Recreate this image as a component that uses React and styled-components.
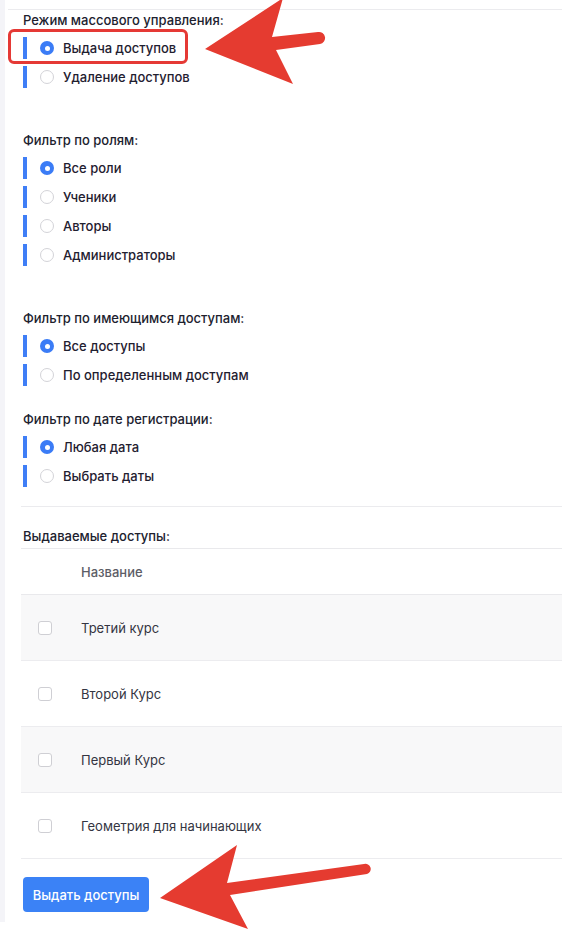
import React from 'react'
import styled, { createGlobalStyle } from 'styled-components'

const GlobalStyle = createGlobalStyle`
  html, body {
    margin: 0;
    padding: 0;
    background: #ffffff;
  }
  body {
    font-family: Inter, "Noto Sans", sans-serif;
    color: #1f2030;
  }
`

const sections = [
  {
    title: 'Режим массового управления:',
    options: ['Выдача доступов', 'Удаление доступов'],
    gap: 42,
    highlight: true,
  },
  {
    title: 'Фильтр по ролям:',
    options: ['Все роли', 'Ученики', 'Авторы', 'Администраторы'],
    gap: 42,
  },
  {
    title: 'Фильтр по имеющимся доступам:',
    options: ['Все доступы', 'По определенным доступам'],
    gap: 23,
  },
  {
    title: 'Фильтр по дате регистрации:',
    options: ['Любая дата', 'Выбрать даты'],
    gap: 19,
  },
]

const courses = ['Третий курс', 'Второй Курс', 'Первый Курс', 'Геометрия для начинающих']

const Arrow = ({ d }) => (
  <ArrowSvg width="562" height="929" viewBox="0 0 562 929">
    <path d={d} fill="#e53b30" />
  </ArrowSvg>
)

const App = () => {
  return (
    <>
      <GlobalStyle />
      <Page>
        <Rail />
        <Content>
          {sections.map((s, si) => (
            <Section key={si} gap={s.gap}>
              <Label>{s.title}</Label>
              <Options>
                {s.options.map((o, oi) => (
                  <Option key={o}>
                    <Bar />
                    <Radio checked={oi === 0} />
                    <OptionText>{o}</OptionText>
                    {s.highlight && oi === 0 && <Highlight />}
                  </Option>
                ))}
              </Options>
            </Section>
          ))}
          <Divider />
          <TableTitle>Выдаваемые доступы:</TableTitle>
          <Table>
            <HeadRow>
              <CheckCell />
              <HeadCell>Название</HeadCell>
            </HeadRow>
            {courses.map((c, i) => (
              <Row key={c} striped={i % 2 === 0}>
                <CheckCell>
                  <Checkbox />
                </CheckCell>
                <Cell>{c}</Cell>
              </Row>
            ))}
          </Table>
          <Button>Выдать доступы</Button>
        </Content>
        <Arrow d="M205,49 L283,-2 L272,37 L318,32 A6,6 0 0 1 320,44 L276,50 L293,84 Z" />
        <Arrow d="M160,898 L237,845 L227,883 L364,864 A5,5 0 0 1 367,874 L230,895 L248,929 Z" />
      </Page>
    </>
  )
}

export default App

const Page = styled.div`
  position: relative;
  display: flex;
  width: 562px;
  height: 929px;
  overflow: hidden;
`
const Rail = styled.div`
  width: 5px;
  height: 922px;
  background: #f4f4f8;
  margin-right: 3px;
`
const Content = styled.div`
  flex: 1;
  margin-top: 9px;
  border-top: 1px solid #ebebee;
  padding-left: 13px;
  display: flex;
  flex-direction: column;
  align-items: flex-start;
`
const Section = styled.div`
  padding-left: 2px;
  margin-top: 1px;
  margin-bottom: ${(p) => p.gap}px;
`
const Label = styled.div`
  font-size: 13px;
  font-weight: 500;
  line-height: 18px;
  color: #20212e;
`
const Options = styled.div`
  display: flex;
  flex-direction: column;
  gap: 7px;
  margin-top: 8px;
`
const Option = styled.div`
  position: relative;
  display: flex;
  align-items: center;
  height: 22px;
`
const Bar = styled.div`
  width: 4px;
  height: 22px;
  background: #3f7ef6;
  margin-right: 13px;
`
const Radio = styled.span`
  box-sizing: border-box;
  width: 14px;
  height: 14px;
  border-radius: 50%;
  background: ${(p) => (p.checked ? '#3b7cf6' : '#ffffff')};
  border: ${(p) => (p.checked ? 'none' : '1px solid #d3d3d8')};
  display: flex;
  align-items: center;
  justify-content: center;
  margin-right: 9px;

  &::after {
    content: '';
    display: ${(p) => (p.checked ? 'block' : 'none')};
    width: 5px;
    height: 5px;
    border-radius: 50%;
    background: #ffffff;
  }
`
const OptionText = styled.span`
  font-size: 13px;
  font-weight: 500;
  color: #1f2030;
`
const Highlight = styled.div`
  position: absolute;
  left: -15px;
  top: -8px;
  width: 180px;
  height: 35px;
  box-sizing: border-box;
  border: 3px solid #e53935;
  border-radius: 6px;
`
const Divider = styled.div`
  align-self: stretch;
  height: 1px;
  background: #ebebee;
`
const TableTitle = styled.div`
  padding-left: 2px;
  margin-top: 20px;
  font-size: 13px;
  font-weight: 500;
  line-height: 18px;
  color: #20212e;
`
const Table = styled.div`
  align-self: stretch;
  margin-top: 3px;
  border-top: 1px solid #e9e9ec;
`
const HeadRow = styled.div`
  display: flex;
  align-items: center;
  height: 45px;
  border-bottom: 1px solid #e9e9ec;
`
const Row = styled.div`
  display: flex;
  align-items: center;
  height: 65px;
  background: ${(p) => (p.striped ? '#f8f8f9' : '#ffffff')};
  border-bottom: 1px solid #ececef;
`
const CheckCell = styled.div`
  width: 60px;
  padding-left: 17px;
  box-sizing: border-box;
  display: flex;
  align-items: center;
`
const Checkbox = styled.span`
  box-sizing: border-box;
  width: 14px;
  height: 14px;
  border: 1px solid #cfcfd4;
  border-radius: 3px;
  background: #ffffff;
`
const HeadCell = styled.div`
  font-size: 13px;
  font-weight: 500;
  color: #5c5d66;
`
const Cell = styled.div`
  font-size: 13px;
  font-weight: 400;
  color: #343542;
`
const Button = styled.button`
  margin-top: 18px;
  margin-left: 2px;
  width: 126px;
  height: 35px;
  border: none;
  border-radius: 4px;
  background: #3b82f6;
  color: #ffffff;
  font-family: Inter, "Noto Sans", sans-serif;
  font-size: 13px;
  font-weight: 500;
  cursor: pointer;
`
const ArrowSvg = styled.svg`
  position: absolute;
  left: 0;
  top: 0;
  pointer-events: none;
`
